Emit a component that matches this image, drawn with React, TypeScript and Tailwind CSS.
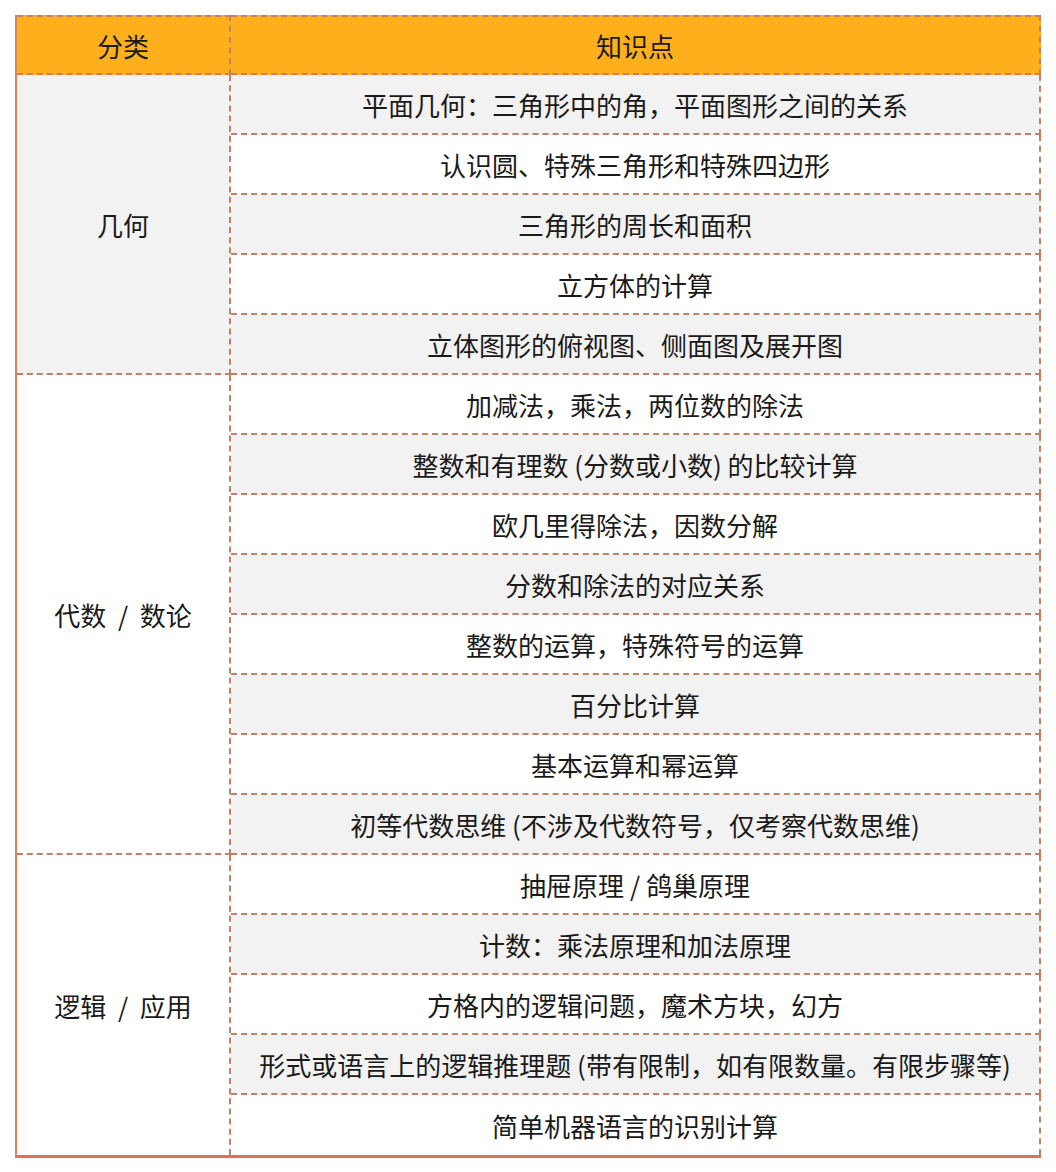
import React from "react";

const groups = [
  {
    name: "几何",
    gray: true,
    rows: [
      "平面几何：三角形中的角，平面图形之间的关系",
      "认识圆、特殊三角形和特殊四边形",
      "三角形的周长和面积",
      "立方体的计算",
      "立体图形的俯视图、侧面图及展开图",
    ],
  },
  {
    name: "代数 / 数论",
    gray: false,
    rows: [
      "加减法，乘法，两位数的除法",
      "整数和有理数 (分数或小数) 的比较计算",
      "欧几里得除法，因数分解",
      "分数和除法的对应关系",
      "整数的运算，特殊符号的运算",
      "百分比计算",
      "基本运算和幂运算",
      "初等代数思维 (不涉及代数符号，仅考察代数思维)",
    ],
  },
  {
    name: "逻辑 / 应用",
    gray: false,
    rows: [
      "抽屉原理 / 鸽巢原理",
      "计数：乘法原理和加法原理",
      "方格内的逻辑问题，魔术方块，幻方",
      "形式或语言上的逻辑推理题 (带有限制，如有限数量。有限步骤等)",
      "简单机器语言的识别计算",
    ],
  },
];

export default function App() {
  let idx = 0;
  const total = groups.reduce((a, g) => a + g.rows.length, 0);
  return (
    <div
      className="w-[1056px] h-[1172px] bg-white pt-[15px] pl-[15px]"
      style={{ fontFamily: '"Noto Sans CJK SC", "Noto Sans", sans-serif' }}
    >
      <div className="w-[1026px] border-l-2 border-b-[3px] border-solid border-l-[#d8825e] border-b-[#e0714f] text-[26px] text-[#1a1a1a]">
        <div className="grid grid-cols-[214px_1fr]">
          <div className="h-[60px] bg-[#fdb01b] border-t-2 border-b-2 border-r-2 border-dashed border-[#c08264] flex items-center justify-center">
            分类
          </div>
          <div className="h-[60px] bg-[#fdb01b] border-t-2 border-b-2 border-r-2 border-dashed border-[#c08264] flex items-center justify-center">
            知识点
          </div>
        </div>
        {groups.map((g, gi) => {
          const isLastGroup = gi === groups.length - 1;
          return (
            <div key={g.name} className="grid grid-cols-[214px_1fr]">
              <div
                className={`border-r-2 border-dashed border-[#c08264] flex items-center justify-center whitespace-pre ${
                  g.gray ? "bg-[#f2f2f2]" : "bg-white"
                } ${isLastGroup ? "" : "border-b-2"}`}
              >
                {g.name.replace(" / ", "  /  ")}
              </div>
              <div className="flex flex-col">
                {g.rows.map((r) => {
                  const i = idx++;
                  const last = i === total - 1;
                  return (
                    <div
                      key={r}
                      className={`h-[60px] border-r-2 border-dashed border-[#c08264] flex items-center justify-center whitespace-pre ${
                        i % 2 === 0 ? "bg-[#f2f2f2]" : "bg-white"
                      } ${last ? "" : "border-b-2"}`}
                    >
                      {r}
                    </div>
                  );
                })}
              </div>
            </div>
          );
        })}
      </div>
    </div>
  );
}
